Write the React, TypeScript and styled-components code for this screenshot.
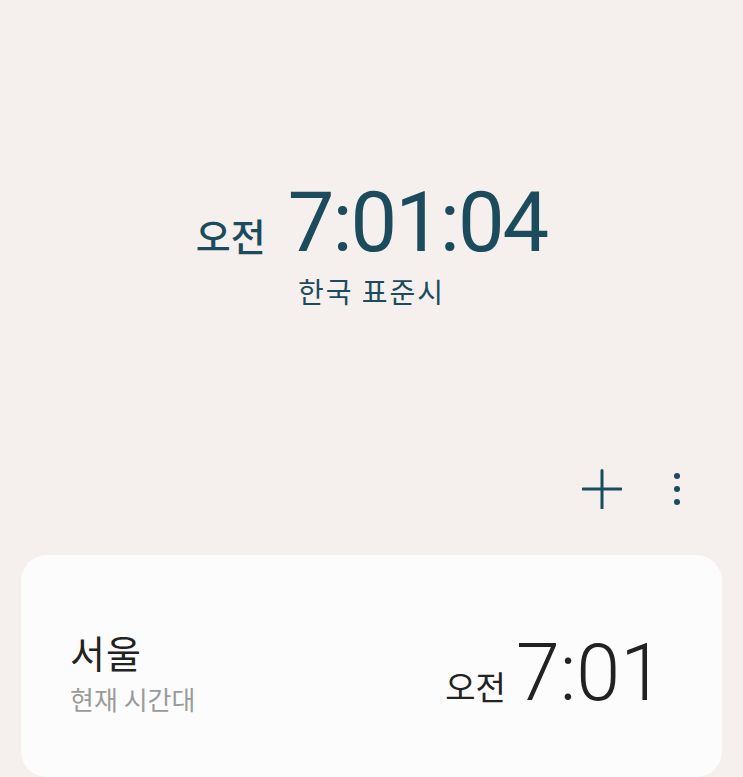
import React from "react";
import styled, { createGlobalStyle } from "styled-components";

const Global = createGlobalStyle`
  html, body { margin: 0; padding: 0; background: #f5f0ee; }
  body { font-family: Roboto, "Noto Sans CJK KR", sans-serif; overflow: hidden; }
`;

const Page = styled.div`
  width: 743px;
  height: 777px;
  background: #f5f0ee;
  display: flex;
  flex-direction: column;
  overflow: hidden;
`;

const Hero = styled.section`
  display: flex;
  flex-direction: column;
  align-items: center;
  padding-top: 181px;
  color: #1b4b5c;
`;

const ClockRow = styled.div`
  display: flex;
  align-items: baseline;
  gap: 22px;
`;

const Meridiem = styled.span<{ $size: number; $color: string; $weight: number }>`
  font-family: "Noto Sans CJK KR", sans-serif;
  font-size: ${(p) => p.$size}px;
  font-weight: ${(p) => p.$weight};
  color: ${(p) => p.$color};
  line-height: 1;
`;

const BigTime = styled.span`
  font-family: Roboto, sans-serif;
  font-size: 83px;
  font-weight: 400;
  letter-spacing: -2px;
  line-height: 1;
`;

const Zone = styled.div`
  font-family: "Noto Sans CJK KR", sans-serif;
  font-size: 28px;
  font-weight: 400;
  letter-spacing: 2px;
  margin-top: 7px;
`;

const Actions = styled.div`
  display: flex;
  justify-content: flex-end;
  align-items: center;
  gap: 31px;
  padding-right: 44px;
  margin-top: 156px;
  height: 44px;
`;

const IconButton = styled.button`
  background: none;
  border: none;
  padding: 0;
  width: 44px;
  height: 44px;
  display: flex;
  align-items: center;
  justify-content: center;
  color: #1b4b5c;
`;

const Card = styled.div`
  margin: 44px 21px 0;
  height: 260px;
  background: #fcfcfc;
  border-radius: 26px;
  display: flex;
  align-items: flex-start;
  justify-content: space-between;
  padding: 74px 58px 0 49px;
  box-sizing: border-box;
`;

const CityBlock = styled.div`
  display: flex;
  flex-direction: column;
  font-family: "Noto Sans CJK KR", sans-serif;
`;

const City = styled.div`
  font-size: 38px;
  color: #222;
  line-height: 1.2;
  letter-spacing: 1px;
`;

const Sub = styled.div`
  font-size: 26px;
  color: #9b9b9b;
  line-height: 1.2;
  margin-top: 8px;
`;

const CardClock = styled.div`
  display: flex;
  align-items: baseline;
  gap: 10px;
  margin-top: 5px;
`;

const CardTime = styled.span`
  font-family: Roboto, sans-serif;
  font-size: 79px;
  font-weight: 300;
  color: #222;
  letter-spacing: 0px;
  line-height: 1;
`;

export default function App() {
  return (
    <Page>
      <Global />
      <Hero>
        <ClockRow>
          <Meridiem $size={38} $color="#1b4b5c" $weight={500}>오전</Meridiem>
          <BigTime>7:01:04</BigTime>
        </ClockRow>
        <Zone>한국 표준시</Zone>
      </Hero>
      <Actions>
        <IconButton aria-label="추가">
          <svg width="40" height="40" viewBox="0 0 40 40">
            <path d="M20 1.5v38M1 20h38" stroke="#1b4b5c" strokeWidth="3" strokeLinecap="round" fill="none" />
          </svg>
        </IconButton>
        <IconButton aria-label="더보기">
          <svg width="8" height="34" viewBox="0 0 8 34">
            <circle cx="4" cy="4" r="3" fill="#1b4b5c" />
            <circle cx="4" cy="17" r="3" fill="#1b4b5c" />
            <circle cx="4" cy="30" r="3" fill="#1b4b5c" />
          </svg>
        </IconButton>
      </Actions>
      <Card>
        <CityBlock>
          <City>서울</City>
          <Sub>현재 시간대</Sub>
        </CityBlock>
        <CardClock>
          <Meridiem $size={33} $color="#222" $weight={400}>오전</Meridiem>
          <CardTime>7:01</CardTime>
        </CardClock>
      </Card>
    </Page>
  );
}
